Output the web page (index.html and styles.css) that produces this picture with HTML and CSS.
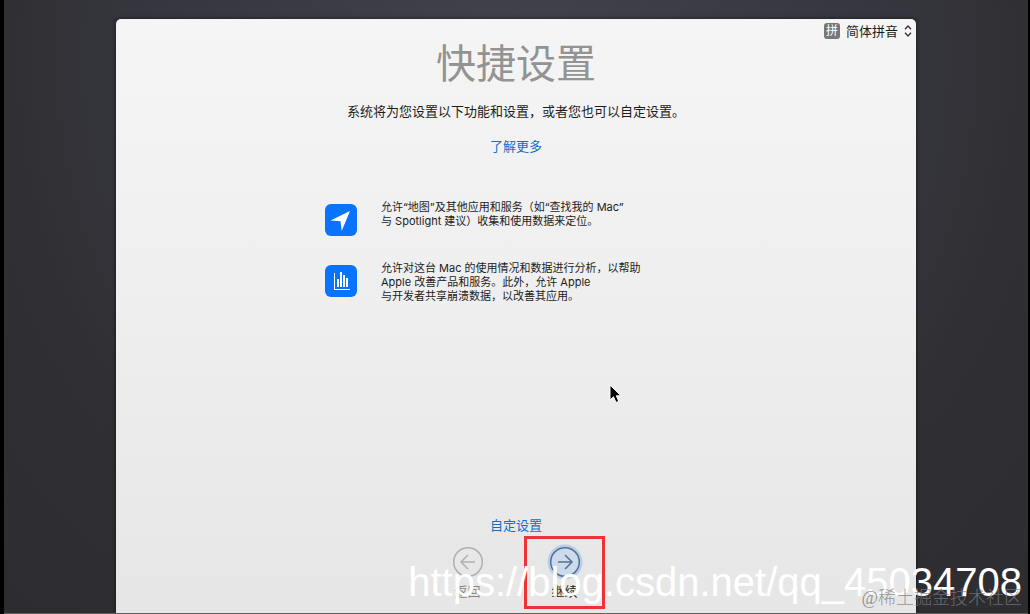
FILE: index.html
```html
<!DOCTYPE html>
<html lang="zh-CN">
<head>
<meta charset="utf-8">
<title>快捷设置</title>
<link rel="stylesheet" href="styles.css">
</head>
<body>
<div class="screen">
  <main class="window">
    <header class="topbar">
      <button class="input-source" type="button">
        <span class="input-badge">拼</span>
        <span>简体拼音</span>
        <svg class="chevrons" viewBox="0 0 8 12" aria-hidden="true"><path d="M1 4.2 4 1l3 3.2M1 7.8 4 11l3-3.2"/></svg>
      </button>
    </header>
    <h1 class="title">快捷设置</h1>
    <p class="intro">系统将为您设置以下功能和设置，或者您也可以自定设置。</p>
    <a class="link" href="#more">了解更多</a>
    <ul class="features">
      <li class="feature">
        <svg class="feature-icon" viewBox="0 0 32 32" aria-hidden="true">
          <rect width="32" height="32" rx="6" fill="#0a73fb"/>
          <path d="M25 7 5.5 16.500l10 .8 1.2 9.700z" fill="#fff"/>
        </svg>
        <p class="feature-text">允许“地图”及其他应用和服务（如“查找我的 Mac”<br>与 Spotlight 建议）收集和使用数据来定位。</p>
      </li>
      <li class="feature">
        <svg class="feature-icon" viewBox="0 0 32 32" aria-hidden="true">
          <rect width="32" height="32" rx="6" fill="#0a73fb"/>
          <path d="M9 8h1v16h15v1H9zM12 14h2v8h-2zM15 7h2v15h-2zM18 10h2v12h-2zM21 13h2v9h-2z" fill="#fff"/>
        </svg>
        <p class="feature-text">允许对这台 Mac 的使用情况和数据进行分析，以帮助<br>Apple 改善产品和服务。此外，允许 Apple<br>与开发者共享崩溃数据，以改善其应用。</p>
      </li>
    </ul>
    <a class="link" href="#customize">自定设置</a>
    <nav class="actions">
      <button class="action action-back" type="button">
        <svg class="action-icon" viewBox="0 0 36 36" aria-hidden="true"><circle cx="18" cy="18" r="14.3"/><path d="M25 18H11.500M18 11l-7 7 7 7"/></svg>
        <span>返回</span>
      </button>
      <button class="action action-next" type="button">
        <svg class="action-icon" viewBox="0 0 36 36" aria-hidden="true"><circle class="halo" cx="18" cy="18" r="16"/><circle cx="18" cy="18" r="14.3"/><path d="M11 18h14M18 11l7 7-7 7"/></svg>
        <span>继续</span>
      </button>
    </nav>
  </main>
  <svg class="cursor" viewBox="0 0 14 20" aria-hidden="true"><path d="M1 1v15l3.500-3.200L7 18.500l2.800-1.200-2.500-5.500H12z"/></svg>
  <div class="watermark-url">https://blog.csdn.net/qq_45034708</div>
  <div class="watermark-site">@稀土掘金技术社区</div>
</div>
</body>
</html>
```
FILE: styles.css
```css
* { box-sizing: border-box; }

body {
  margin: 0;
  background: #000;
  color: #1c1c1c;
  font-family: Inter, "Noto Sans CJK SC", sans-serif;
  font-size: 13px;
  line-height: 20px;
}

h1, p, ul { margin: 0; padding: 0; }

button {
  padding: 0;
  border: 0;
  background: none;
  color: inherit;
  font: inherit;
}

.screen {
  position: relative;
  display: flex;
  justify-content: center;
  min-height: 100vh;
  margin: 0 2px 0 4px;
  padding: 19px 112px 0;
  overflow: hidden;
  border-bottom: 1px solid #605e61;
  background: radial-gradient(ellipse at 50% 10%, #42424c 0%, #36363f 50%, #303034 70%, #2d2d31 100%);
}

.window {
  display: flex;
  flex: 1;
  flex-direction: column;
  align-items: center;
  border-radius: 5px 5px 0 0;
  background: linear-gradient(#f5f5f5, #efefef 45%, #e6e6e6);
  box-shadow: 0 0 4px rgba(0, 0, 0, .6);
}

.topbar {
  align-self: flex-end;
  padding: 2px 4px 0 0;
}

.input-source {
  display: flex;
  align-items: center;
  gap: 6px;
}

.input-badge {
  width: 16px;
  height: 16px;
  border-radius: 3px;
  background: #777;
  color: #fff;
  font-size: 12px;
  line-height: 16px;
}

.chevrons {
  width: 8px;
  height: 12px;
  fill: none;
  stroke: #333;
  stroke-width: 1.3;
}

.title {
  color: #939393;
  font-size: 40px;
  font-weight: 400;
  line-height: 46px;
}

.intro { margin-top: 14px; }

.link {
  margin-top: 15px;
  color: #0f6fca;
  text-decoration: none;
}

.features {
  display: grid;
  gap: 19px;
  width: 382px;
  margin: 44px 0 auto;
  list-style: none;
}

.feature {
  display: flex;
  gap: 24px;
  min-height: 42px;
}

.feature-icon {
  flex: none;
  width: 32px;
  height: 32px;
  margin-top: 4px;
}

.feature-text {
  font-size: 11px;
  line-height: 14px;
  white-space: nowrap;
}

.actions {
  display: flex;
  gap: 16px;
  margin: 1px 0 4px;
}

.action {
  display: flex;
  flex-direction: column;
  align-items: center;
  gap: 1px;
  width: 81px;
  height: 73px;
  padding-top: 5px;
  border: 3px solid transparent;
}

.action-back { color: #888; }
.action-next { border-color: #ee3336; }

.action-icon {
  flex: none;
  width: 36px;
  height: 36px;
  fill: none;
  stroke: #b0b0b0;
  stroke-width: 1.5;
}

.action-next .action-icon { stroke: #58708f; }
.action-icon .halo { fill: #cbdaed; stroke: #b8cfeb; stroke-width: 3; }

.cursor {
  position: absolute;
  top: 384px;
  left: 605px;
  width: 14px;
  height: 20px;
  fill: #000;
  stroke: #fff;
}

.watermark-url {
  position: absolute;
  right: 6px;
  bottom: 8px;
  color: #fff;
  font-family: "Liberation Sans", sans-serif;
  font-size: 40px;
  line-height: 46px;
}

.watermark-site {
  position: absolute;
  right: 6px;
  bottom: 3px;
  color: rgba(125, 125, 125, .8);
  font-family: "Liberation Serif", "Noto Sans CJK SC", sans-serif;
  font-size: 18px;
  font-weight: 300;
  line-height: 24px;
}
```
